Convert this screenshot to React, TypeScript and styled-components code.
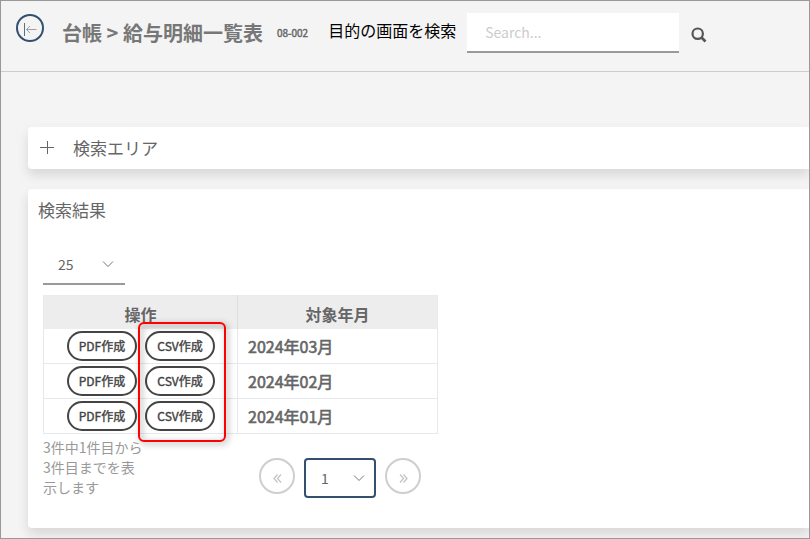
import React, { useState } from "react";
import styled, { createGlobalStyle } from "styled-components";

const GlobalStyle = createGlobalStyle`
  *, *::before, *::after { box-sizing: border-box; }
  body {
    margin: 0;
    background: #f4f4f4;
    color: #666;
    font-family: "Noto Sans CJK JP", sans-serif;
    font-size: 14px;
  }
  button, input, select { font: inherit; color: inherit; margin: 0; }
`;

const Page = styled.div`
  min-height: 100vh;
  border: 1px solid #999;
  overflow: hidden;
`;

const Header = styled.header`
  display: flex;
  align-items: flex-start;
  padding: 12px 16px 14px 15px;
  border-bottom: 1px solid #ccc;
`;

const CollapseButton = styled.button`
  display: flex;
  align-items: center;
  justify-content: center;
  width: 28px;
  height: 28px;
  padding: 0;
  margin: 1px 18px 0 0;
  border: 2px solid #34506f;
  border-radius: 50%;
  background: transparent;
`;

const Title = styled.h1`
  margin: 0;
  font-size: 20px;
  line-height: 40px;
  color: #777;
  white-space: nowrap;
`;

const ScreenCode = styled.span`
  margin-left: 14px;
  font-size: 10px;
  line-height: 40px;
  color: #666;
  -webkit-text-stroke: 0.4px #666;
  white-space: nowrap;
`;

const SearchForm = styled.form`
  display: flex;
  align-items: flex-start;
  margin-left: 20px;
`;

const SearchLabel = styled.label`
  margin-right: 11px;
  font-size: 16px;
  line-height: 34px;
  color: #000;
  white-space: nowrap;
`;

const SearchInput = styled.input`
  width: 212px;
  height: 40px;
  padding: 0 18px;
  border: 0;
  border-bottom: 2px solid #999;
  border-radius: 0;
  background: #fff;
  outline: none;
  &::placeholder { color: #ccc; opacity: 1; }
`;

const SearchButton = styled.button`
  display: flex;
  align-items: center;
  height: 44px;
  padding: 0 12px;
  border: 0;
  background: transparent;
`;

const Main = styled.main`
  display: flex;
  flex-direction: column;
  gap: 20px;
  padding: 55px 0 10px 27px;
`;

const Card = styled.section`
  border-radius: 4px 0 0 4px;
  background: #fff;
  box-shadow: 0 6px 12px rgba(0, 0, 0, 0.12);
`;

const AccordionButton = styled.button`
  display: flex;
  align-items: center;
  gap: 19px;
  width: 100%;
  height: 42px;
  padding: 0 12px 2px;
  border: 0;
  background: transparent;
  font-size: 17px;
  text-align: left;
`;

const CardTitle = styled.h2`
  margin: 0;
  padding: 0 10px;
  font-size: 17px;
  font-weight: 400;
  line-height: 42px;
`;

const CardBody = styled.div`
  padding: 14px 15px 30px;
`;

const SelectBox = styled.div<{ $boxed?: boolean }>`
  display: grid;
  align-items: center;
  width: ${(p) => (p.$boxed ? 72 : 82)}px;
  height: 40px;
  border: ${(p) => (p.$boxed ? "2px solid #34506f" : "0 solid #999")};
  border-bottom-width: 2px;
  border-radius: ${(p) => (p.$boxed ? 4 : 0)}px;

  select, svg { grid-area: 1 / 1; }
  select {
    width: 100%;
    height: 100%;
    padding: 0 15px;
    border: 0;
    background: transparent;
    appearance: none;
    outline: none;
  }
  svg {
    justify-self: end;
    margin-right: ${(p) => (p.$boxed ? 9 : 11)}px;
    pointer-events: none;
  }
`;

const TableWrap = styled.div`
  position: relative;
  width: 395px;
  margin-top: 10px;
`;

const Table = styled.table`
  width: 100%;
  border-collapse: collapse;
  table-layout: fixed;
  font-size: 16px;
`;

const HeadCell = styled.th`
  height: 33px;
  padding: 4px 0 0;
  border: 1px solid #ebebeb;
  border-right-color: #ddd;
  border-bottom: 0;
  background: #ededed;
  line-height: 24px;
  &:first-child { width: 194px; }
  &:last-child { border-right-color: #ebebeb; }
`;

const Cell = styled.td`
  height: 35px;
  padding: 0 10px;
  border: 1px solid #e6e8f0;
  line-height: 24px;
  -webkit-text-stroke: 0.6px;
  tbody tr:first-child & { border-top: 0; }
`;

const Actions = styled.div`
  display: flex;
  gap: 8px;
  padding-left: 13px;
`;

const PillButton = styled.button`
  flex: none;
  width: 70px;
  height: 30px;
  padding: 0;
  border: 2px solid #444;
  border-radius: 15px;
  background: #fff;
  color: #444;
  font-size: 12px;
  line-height: 24px;
  white-space: nowrap;
  -webkit-text-stroke: 0.4px;
`;

const Highlight = styled.div`
  position: absolute;
  top: 27px;
  left: 95px;
  width: 88px;
  height: 120px;
  border: 2px solid #f00;
  border-radius: 6px;
  filter: drop-shadow(2px 2px 3px rgba(0, 0, 0, 0.45));
  pointer-events: none;
`;

const TableFooter = styled.div`
  display: flex;
  align-items: flex-start;
  gap: 114px;
  padding-top: 3px;
`;

const Summary = styled.p`
  width: 102px;
  margin: 0;
  line-height: 20px;
  color: #999;
`;

const Pager = styled.nav`
  display: flex;
  align-items: flex-start;
  gap: 9px;
  padding-top: 21px;
`;

const PagerButton = styled.button`
  display: flex;
  align-items: center;
  justify-content: center;
  width: 36px;
  height: 36px;
  padding: 4px 0 0;
  border: 2px solid #cececa;
  border-radius: 50%;
  background: #fff;
`;

const Chevron = () => (
  <svg width="12" height="8" viewBox="0 0 12 8" fill="none" stroke="#777" aria-hidden="true">
    <path d="M1 1.5 6 6.5 11 1.5" />
  </svg>
);

const DoubleChevron = ({ right }: { right?: boolean }) => (
  <svg width="9" height="9" viewBox="0 0 9 9" fill="none" stroke="#c4c4c4" strokeWidth="1.3" aria-hidden="true">
    <path d={right ? "M1 .5 4.5 4.5 1 8.5M4.5 .5 8 4.5 4.5 8.5" : "M4.5 .5 1 4.5 4.5 8.5M8 .5 4.5 4.5 8 8.5"} />
  </svg>
);

const months = ["2024年03月", "2024年02月", "2024年01月"];

export default function App() {
  const [size, setSize] = useState("25");
  const [query, setQuery] = useState("");

  return (
    <Page>
      <GlobalStyle />
      <Header>
        <CollapseButton type="button" aria-label="メニューを閉じる">
          <svg width="16" height="16" viewBox="0 0 16 16" fill="none" aria-hidden="true">
            <path d="M2.5 3v13" stroke="#5a708a" />
            <path d="M14.5 9.5h-10M8 6l-3.500 3.500 3.500 3.500" stroke="#9a9fa8" />
          </svg>
        </CollapseButton>
        <Title>台帳 &gt; 給与明細一覧表</Title>
        <ScreenCode>08-002</ScreenCode>
        <SearchForm onSubmit={(e) => e.preventDefault()}>
          <SearchLabel htmlFor="screen-search">目的の画面を検索</SearchLabel>
          <SearchInput
            id="screen-search"
            placeholder="Search..."
            value={query}
            onChange={(e) => setQuery(e.target.value)}
          />
          <SearchButton type="submit" aria-label="検索">
            <svg width="16" height="16" viewBox="0 0 16 16" fill="none" stroke="#555" aria-hidden="true">
              <circle cx="6.7" cy="6.7" r="5.2" strokeWidth="2.2" />
              <path d="m10.5 10.5 4 4" strokeWidth="2.6" />
            </svg>
          </SearchButton>
        </SearchForm>
      </Header>

      <Main>
        <Card>
          <AccordionButton type="button" aria-expanded="false">
            <svg width="14" height="14" viewBox="0 0 14 14" stroke="#666" aria-hidden="true">
              <path d="M0 7.5h14M7.5 1v13" />
            </svg>
            検索エリア
          </AccordionButton>
        </Card>

        <Card>
          <CardTitle>検索結果</CardTitle>
          <CardBody>
            <SelectBox>
              <select aria-label="表示件数" value={size} onChange={(e) => setSize(e.target.value)}>
                <option>25</option>
                <option>50</option>
                <option>100</option>
              </select>
              <Chevron />
            </SelectBox>

            <TableWrap>
              <Table>
                <thead>
                  <tr>
                    <HeadCell scope="col">操作</HeadCell>
                    <HeadCell scope="col">対象年月</HeadCell>
                  </tr>
                </thead>
                <tbody>
                  {months.map((month) => (
                    <tr key={month}>
                      <Cell>
                        <Actions>
                          <PillButton type="button">PDF作成</PillButton>
                          <PillButton type="button">CSV作成</PillButton>
                        </Actions>
                      </Cell>
                      <Cell>{month}</Cell>
                    </tr>
                  ))}
                </tbody>
              </Table>
              <Highlight />
            </TableWrap>

            <TableFooter>
              <Summary>3件中1件目から3件目までを表示します</Summary>
              <Pager aria-label="ページ">
                <PagerButton type="button" aria-label="前のページ">
                  <DoubleChevron />
                </PagerButton>
                <SelectBox $boxed>
                  <select aria-label="ページ番号" defaultValue="1">
                    <option>1</option>
                  </select>
                  <Chevron />
                </SelectBox>
                <PagerButton type="button" aria-label="次のページ">
                  <DoubleChevron right />
                </PagerButton>
              </Pager>
            </TableFooter>
          </CardBody>
        </Card>
      </Main>
    </Page>
  );
}
